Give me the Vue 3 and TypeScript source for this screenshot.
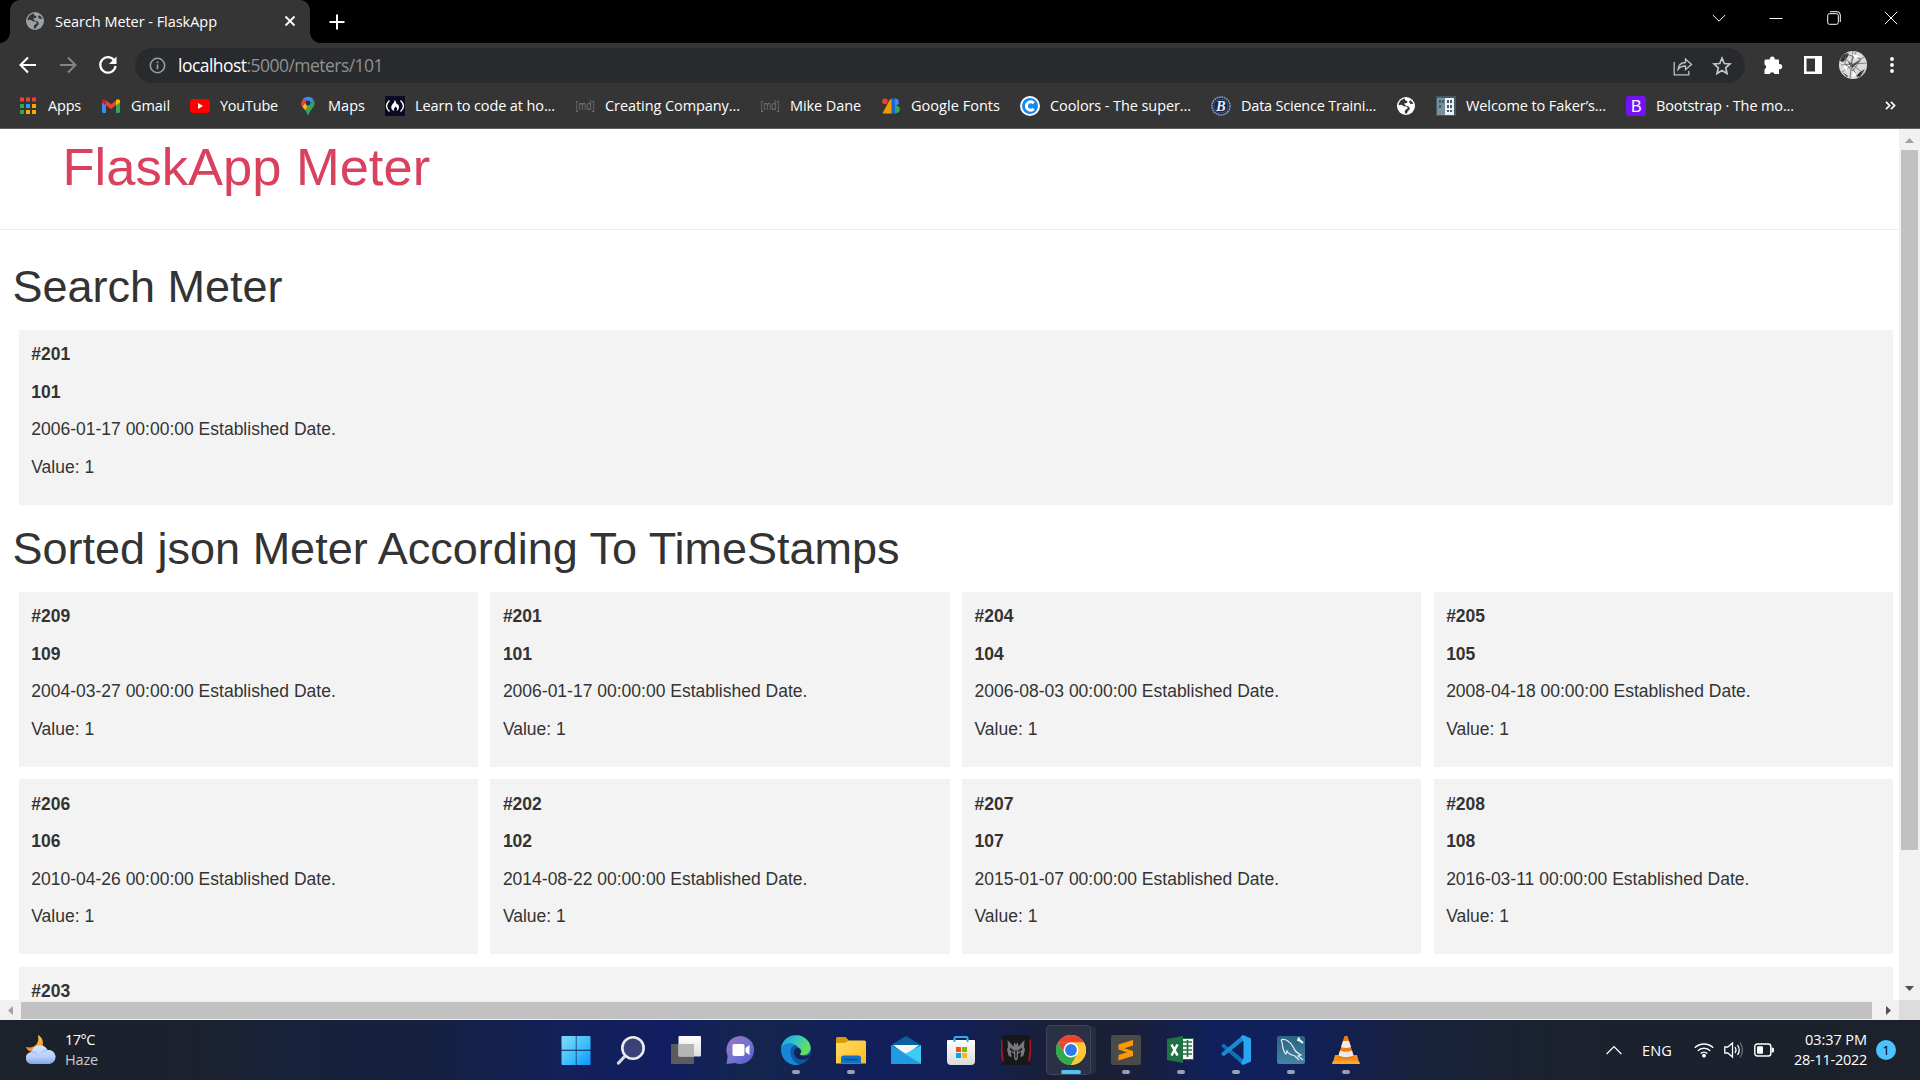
<script setup lang="ts">
interface Bookmark { label?: string; width?: number; icon: string }
interface Meter { id: number; meter: number; date: string; value: number }
interface TaskItem { name: string; icon: string; state?: 'open' | 'active' }

// Spreads the letters of a label so that it fills its slot exactly.
const vFit = {
  mounted(el: HTMLElement, binding: { value: number }) {
    const range = document.createRange()
    range.selectNodeContents(el)
    const natural = range.getBoundingClientRect().width
    const count = (el.textContent ?? '').length
    el.style.letterSpacing = `${(binding.value - natural) / count}px`
  },
}

const globe = (fill: string, land: string) =>
  `<circle cx="10" cy="10" r="9" fill="${fill}"/><path fill="${land}" d="M9 2.600C5 3.200 2.700 6.300 2.700 9.300q1.500-.8 3.300-.3l1.500 1.300 3 .2q1.500.6 1 2l-1.800 1.300-1 1.200.3 2.500c1.700.2 2.500-.8 2.700-2.300l1.900-1.600c.6-2.600-1-3.400-3-3.600L9 9 8 7.400l3-.5.400-2-2.500-.6zM14.300 4.200l-1.300 1.500 1.100 2.100 3.200.3c-.4-1.700-1.500-3-3-3.900z"/>`

const bookmarks: Bookmark[] = [
  { label: 'Apps', width: 33, icon: '<g fill="#ea4335"><path d="M2 1.500h4v4H2zM8 1.500h4v4H8zM14 1.500h4v4h-4z"/></g><path fill="#34a853" d="M2 8h4v4H2zM2 14h4v4H2z"/><path fill="#2a9df4" d="M8 8h4v4H8z"/><path fill="#fbab00" d="M14 8h4v4h-4zM8 14h4v4H8zM14 14h4v4h-4z"/>' },
  { label: 'Gmail', width: 39, icon: '<path fill="#4285f4" d="M1 5v10.500Q1 17 2.500 17H5V8z"/><path fill="#34a853" d="M19 5v10.500q0 1.500-1.500 1.500H15V8z"/><path fill="#ea4335" d="M5 4.500l5 3.800 5-3.800v4.800l-5 3.800-5-3.800z"/><path fill="#c5221f" d="M1 5.500C1 3 3.200 2.600 5 4v5.300L1 6.500z"/><path fill="#fbbc04" d="M19 5.500C19 3 16.800 2.600 15 4v5.300l4-2.800z"/>' },
  { label: 'YouTube', width: 58, icon: '<rect x="0" y="3" width="20" height="14" rx="3.500" fill="#f00"/><path fill="#fff" d="M8 7l5 3-5 3z"/>' },
  { label: 'Maps', width: 37, icon: '<path fill="#34a853" d="M16.500 7c0 5-4.500 6-6.500 13-.7-2.600-1.700-4.300-2.800-5.800L15.700 4q.8 1.300.8 3z"/><path fill="#fbbc04" d="M7.200 14.200C5.300 11.800 3.500 10.500 3.500 7l4-1 4.500 2.500z"/><path fill="#ea4335" d="M3.500 7c0-1.800.6-3.200 1.600-4.300l3.700 3L4.600 10.500Q3.500 9 3.500 7z"/><path fill="#4285f4" d="M5.100 2.700C7.800-.2 13.500-.3 15.700 4L8.800 12 8 5z"/><circle cx="10" cy="7" r="2.400" fill="#2f3033"/>' },
  { label: 'Learn to code at ho...', width: 140, icon: '<rect width="20" height="20" fill="#0a0a23"/><path fill="none" stroke="#fff" stroke-width="1.400" d="M4.500 4.500c-4 3.500-4 7.500 0 11M15.500 4.500c4 3.500 4 7.500 0 11"/><path fill="#fff" d="M9.500 4c2 1.500 1.400 3 2.300 4.300.6.800.9-.3.700-.9 2.300 2.800 1.900 6.100-1 7.600 1.500-2 .3-3.800-1-4.800.2 1.500-1 1.300-1.500 2.500-.3.900 0 1.600.7 2.300-4.600-1.300-4-5-1.600-7.500C9.300 6.300 9.700 5.300 9.500 4z"/>' },
  { label: 'Creating Company...', width: 135, icon: '<text x="0.500" y="14" textLength="19" lengthAdjust="spacingAndGlyphs" font-size="13" font-family="Open Sans, sans-serif" fill="#77787a">[md]</text>' },
  { label: 'Mike Dane', width: 71, icon: '<text x="0.500" y="14" textLength="19" lengthAdjust="spacingAndGlyphs" font-size="13" font-family="Open Sans, sans-serif" fill="#77787a">[md]</text>' },
  { label: 'Google Fonts', width: 89, icon: '<path fill="#f29900" d="M8.500 4L11 2.500V17.500H1.500z"/><circle cx="4" cy="5.300" r="2.800" fill="#ea4335"/><path fill="#1967d2" d="M10.500 2.500h4v15h-4z"/><path fill="#4285f4" d="M14 2.500c5 0 5.500 7 0 7z"/><path fill="#34a853" d="M14 9.300c6.500 0 6.500 8.200 0 8.200z"/>' },
  { label: 'Coolors - The super...', width: 141, icon: '<circle cx="10" cy="10" r="10" fill="#fff"/><circle cx="10" cy="10" r="8" fill="#1489f4"/><path fill="none" stroke="#fff" stroke-width="3" d="M13.700 7.200a4.200 4.200 0 1 0 0 5.600"/>' },
  { label: 'Data Science Traini...', width: 135, icon: '<circle cx="10" cy="10" r="9" fill="#132450" stroke="#8492ad" stroke-width="1.600" stroke-dasharray="2 .5"/><circle cx="10" cy="10" r="7" fill="none" stroke="#64759a" stroke-width=".6"/><text x="5" y="15" font-size="14.500" font-style="italic" font-weight="bold" font-family="Liberation Serif, serif" fill="#e8edf5">B</text>' },
  { icon: globe('#fff', '#353535') },
  { label: 'Welcome to Faker’s...', width: 140, icon: '<rect y="0" width="20" height="20" fill="#455a64"/><path fill="#78909c" d="M1 2h8v17H1z"/><path fill="#eceff1" d="M9 2h9v17H9z"/><path fill="#455a64" d="M3 4h2v3H3zM6 4h2v3H6zM3 9h2v3H3zM11 4h5v3h-5zM11 9h5v3h-5zM11 14h5v2h-5z"/><path fill="#fff" d="M13 3h1v14h-1z"/>' },
  { label: 'Bootstrap · The mo...', width: 138, icon: '<rect width="20" height="20" rx="3" fill="#7412f5"/><text x="5" y="15.500" font-size="16" font-family="Liberation Sans, sans-serif" fill="#fff">B</text>' },
]

const found: Meter = { id: 201, meter: 101, date: '2006-01-17', value: 1 }

const sorted: Meter[] = [
  { id: 209, meter: 109, date: '2004-03-27', value: 1 },
  { id: 201, meter: 101, date: '2006-01-17', value: 1 },
  { id: 204, meter: 104, date: '2006-08-03', value: 1 },
  { id: 205, meter: 105, date: '2008-04-18', value: 1 },
  { id: 206, meter: 106, date: '2010-04-26', value: 1 },
  { id: 202, meter: 102, date: '2014-08-22', value: 1 },
  { id: 207, meter: 107, date: '2015-01-07', value: 1 },
  { id: 208, meter: 108, date: '2016-03-11', value: 1 },
]

const lastId = 203

const tasks: TaskItem[] = [
  { name: 'start', icon: '<defs><linearGradient id="win" x1="0" y1="0" x2="30" y2="30" gradientUnits="userSpaceOnUse"><stop stop-color="#86dcfb"/><stop offset=".55" stop-color="#3dc0f9"/><stop offset="1" stop-color="#0a94ff"/></linearGradient></defs><path fill="url(#win)" d="M1.500 1H14.800v13.800H.500V2q0-1 1-1zM15.500 1h13q1 0 1 1v12.800h-14zM.5 15.800h14.300V30H1.500q-1 0-1-1zM15.500 15.800h14V29q0 1-1 1h-13z"/>' },
  { name: 'search', icon: '<path stroke="#d9dade" stroke-width="3.200" stroke-linecap="round" d="M2.500 28l7.500-8"/><circle cx="17" cy="13" r="10.700" fill="#3a4379" stroke="#ececee" stroke-width="2.600"/>' },
  { name: 'views', icon: '<defs><linearGradient id="tv" x1="0" y1="0" x2="0" y2="1"><stop stop-color="#fff"/><stop offset="1" stop-color="#dcdcdc"/></linearGradient></defs><rect x="0" y="9" width="23" height="20" rx="1" fill="#5c5c5f"/><rect x="7.500" y="1" width="22.500" height="20.500" rx="1" fill="url(#tv)"/><path fill="#b5b5b6" d="M7.500 9H23v12.500H8.500q-1 0-1-1z"/>' },
  { name: 'chat', icon: '<defs><linearGradient id="ch" x1="0" y1="0" x2="1" y2="1"><stop stop-color="#a473bc"/><stop offset=".55" stop-color="#7173d2"/><stop offset="1" stop-color="#5457c9"/></linearGradient></defs><path fill="url(#ch)" d="M15 1a14 14 0 1 1-6 27L.500 29l1.200-8A14 14 0 0 1 15 1z"/><rect x="6.500" y="9" width="12" height="12" rx="1.800" fill="#fff"/><path fill="#fff" d="M19.500 13l4-3v10l-4-3z"/>' },
  { name: 'edge', state: 'open', icon: '<defs><linearGradient id="eg" x1="0" y1="0" x2="1" y2=".4"><stop stop-color="#1b9de0"/><stop offset=".5" stop-color="#32c5c9"/><stop offset="1" stop-color="#62e05a"/></linearGradient></defs><circle cx="15" cy="15" r="15" fill="#0c59a4"/><path fill="url(#eg)" d="M0 14C1-1 20-4 27 6c6 8 1 15-6 14-4 0-4-2-2-4 0-5-8-9-14-6-3 1-5 3-5 4z"/><path fill="#1487d6" d="M0 14c1-5 9-8 14-4-5 2-6 8-3 13 2 4 5 6 8 6.500C8 32 0 24 0 14z"/><path fill="#12225c" d="M28 20c-3 2-9 1.500-9-.5 0-1.500 1.500-1.500 1-4-.3-1.600-2-3-4-2.500-4 1-4 7 0 10 4 2.700 9 1.700 12-1l3-1.500z"/>' },
  { name: 'explorer', state: 'open', icon: '<defs><linearGradient id="fo" x1="0" y1="0" x2="1" y2="1"><stop stop-color="#ffdc68"/><stop offset="1" stop-color="#fbbb1b"/></linearGradient></defs><path fill="#dc9a05" d="M0 3.500Q0 2 1.500 2h8l3.500 3.500L11 10H0z"/><path fill="url(#fo)" d="M0 8h9l4-2.500h15.500q1.500 0 1.500 1.500v21.500H0z"/><path fill="#0f72c4" d="M5 28v-5q0-2.500 2.500-2.500h15Q25 20.500 25 23v5z"/><path stroke="#094980" stroke-width="1.200" d="M8 24.500h14"/>' },
  { name: 'mail', icon: '<path fill="#0b5e9f" d="M0 10L15 1l15 9v8H0z"/><path fill="#f5f5f7" d="M2 10h26L15 20z"/><path fill="#1e9be2" d="M0 10l15 9 15 10H0z"/><path fill="#3dccf5" d="M30 10v19L14 19z"/>' },
  { name: 'store', icon: '<defs><linearGradient id="st" x1="0" y1="0" x2="0" y2="1"><stop stop-color="#fff"/><stop offset="1" stop-color="#dadada"/></linearGradient></defs><path fill="none" stroke="#29b0ec" stroke-width="2" d="M8.500 7V3q0-1 1-1h11q1 0 1 1v4"/><path fill="url(#st)" d="M2 5h26q1 0 1 1v20q0 4-4 4H5q-4 0-4-4V6q0-1 1-1z"/><path fill="#f25022" d="M10 12h5v5h-5z"/><path fill="#7fba00" d="M16 12h5v5h-5z"/><path fill="#00a4ef" d="M10 18h5v5h-5z"/><path fill="#ffb900" d="M16 18h5v5h-5z"/><path fill="none" stroke="#29b0ec" stroke-width="2" d="M8.500 4v3M21.500 4v3"/>' },
  { name: 'predator', icon: '<rect x=".5" width="29" height="30" rx="3" fill="#18181a"/><path fill="#a9161d" d="M0 3l1.500 3v10L3 27l-2-1-1-6zM30 3l-1.500 3v10L27 27l2-1 1-6z"/><path fill="#77797c" d="M6.500 5l6 6.500.8-4.500 1.700 3 1.700-3 .8 4.500 6-6.500-.5 7 1 2.500-1.500 6-3 2 .5-6-3 2.500V23l-2 3-2-3v-4l-3-2.500.5 6-3-2-1.500-6 1-2.500z"/><path fill="#1d1d1f" d="M9 12.500l4.500 3.500-1 1L9 15zM21 12.500L16.500 16l1 1L21 15zM14.300 15h1.400v8h-1.400z"/>' },
  { name: 'chrome', state: 'active', icon: '<circle cx="15" cy="15" r="15" fill="#fcc934"/><path fill="#ea4335" d="M2 7.500a15 15 0 0 1 26 0H15z"/><path fill="#34a853" d="M2 7.500A15 15 0 0 0 15 30l6.500-11.200H8.500z"/><path fill="#ea4335" d="M2 7.500L8.500 18.800 9 11l6-3.500h13z"/><path fill="#fcc934" d="M15 7.500h13A15 15 0 0 1 15 30l6.500-11.200z"/><path fill="#34a853" d="M2 7.500L8.500 18.800 15 22v8A15 15 0 0 1 2 7.500z"/><circle cx="15" cy="15" r="7.500" fill="#fff"/><circle cx="15" cy="15" r="5.900" fill="#2d7bea"/>' },
  { name: 'sublime', state: 'open', icon: '<rect width="30" height="30" rx="2" fill="#4a4a49"/><path fill="#ff9800" d="M22 5v5.500l-8.500 2.700L22 16v5L7.500 25.500V20l8.500-2.700L7.500 14.500v-5z"/>' },
  { name: 'excel', state: 'open', icon: '<path fill="#f4f8f5" stroke="#207245" stroke-width="1" d="M14 3.500h13.500v21H14z"/><path fill="none" stroke="#207245" stroke-width="1.700" d="M17 7h9M17 11h9M17 15h9M17 19h9M21.500 5v17"/><path fill="#207245" d="M1 4l16-3v27L1 25z"/><path stroke="#fff" stroke-width="2.500" d="M5.500 9.500l6 11M11.500 9.500l-6 11"/>' },
  { name: 'vscode', state: 'open', icon: '<path fill="#0f72b9" d="M2.500 8.500L23 25l-1 5L0 11z"/><path fill="#1a8ad4" d="M2.500 21.500L23 5l-1-5L0 18.500z"/><path fill="#2aa5f2" d="M22 0l8 3.500v23L22 30l-2-1.500 2.500-5.500V7L20 1.500z"/>' },
  { name: 'workbench', state: 'open', icon: '<defs><linearGradient id="wb" x1="0" y1="0" x2="0" y2="1"><stop stop-color="#2b647f"/><stop offset="1" stop-color="#4583a4"/></linearGradient></defs><rect x="1" y="1" width="28" height="28" rx="2" fill="url(#wb)"/><path fill="none" stroke="#e4eef3" stroke-width="1.200" d="M5 5c4-2 10 2 12.500 7.500 1 3.500 3.500 5.500 7.500 7.500l-3 1 5 4M5 5c2 3 1 5 2 8s1 5 3 6l1-3c2 4 5 4 8 5l4 4"/><path stroke="#f5f8fa" stroke-width="2.200" d="M22 4l5 4M23 2.500l-1 3.500"/>' },
  { name: 'vlc', state: 'open', icon: '<path fill="#f78f1e" d="M4 20h22l2.500 9H1.500z"/><path fill="#fba832" d="M2 26h26l1 3H1z"/><path fill="#f07c12" d="M13.500 1h3L23 22q-8 4-16 0z"/><path fill="#ececec" d="M12 6h6l2 6q-5 2-10 0zM9 15.500q6 2.500 12 0l1.500 5q-7.500 3.500-15 0z"/>' },
]
</script>

<template>
  <div class="screen">
    <header class="tabstrip">
      <div class="tab">
        <svg class="favicon" viewBox="0 0 20 20" v-html="globe('#9aa0a6', '#353535')"></svg>
        <span v-fit="162" class="tab-title">Search Meter - FlaskApp</span>
        <svg class="tab-close" viewBox="0 0 12 12"><path d="M1.500 1.500l9 9M10.500 1.500l-9 9" stroke="#fff" stroke-width="1.800" /></svg>
      </div>
      <svg class="new-tab" viewBox="0 0 16 16"><path d="M8 .5v15M.5 8h15" stroke="#fff" stroke-width="2" /></svg>
      <div class="window-buttons">
        <svg viewBox="0 0 14 14"><path d="M.8 4L7 10.200 13.200 4" /></svg>
        <svg viewBox="0 0 14 14"><path d="M.5 7.500h13" /></svg>
        <svg viewBox="0 0 14 14"><rect x=".7" y="2.700" width="10.600" height="10.600" rx="1.800" /><path d="M3 .7h7q3.300 0 3.300 3.300v7" /></svg>
        <svg viewBox="0 0 14 14"><path d="M.8.8l12.400 12.400M13.200.8L.8 13.200" /></svg>
      </div>
    </header>

    <div class="toolbar">
      <svg class="nav" viewBox="0 0 20 20"><path d="M18 10H2.500M10 2.500L2.500 10l7.500 7.500" fill="none" stroke="#fff" stroke-width="2.100" /></svg>
      <svg class="nav" viewBox="0 0 20 20"><path d="M2 10h15.500M10 2.500l7.500 7.500-7.500 7.500" fill="none" stroke="#858585" stroke-width="2" /></svg>
      <svg class="nav" viewBox="0 0 20 20"><path d="M16.500 5.800A7.700 7.700 0 1 0 17.600 11" fill="none" stroke="#fff" stroke-width="2.200" /><path d="M18.500 1.500v7.500h-7.500z" fill="#fff" /></svg>
      <div class="omnibox">
        <svg class="info" viewBox="0 0 18 18"><circle cx="9" cy="9" r="7.600" fill="none" stroke="#9aa0a6" stroke-width="1.600" /><path d="M9 8v5M9 4.800v1.800" stroke="#9aa0a6" stroke-width="1.800" /></svg>
        <span v-fit="205" class="url"><b>localhost</b>:5000/meters/101</span>
        <svg class="share" viewBox="0 0 20 20"><path d="M1.200 6v12.800h14.600V15M5 13.500C5.500 8.500 8.500 6.700 12.500 6.500V3l6 5.500-6 5V10C9.500 10 7 10.800 5 13.500z" fill="none" stroke="#bdc1c6" stroke-width="1.300" /></svg>
        <svg class="star" viewBox="0 0 20 20"><path d="M10 2.200l2.300 5.300 5.700.5-4.300 3.800 1.300 5.600-5-3-5 3 1.300-5.600L2 8l5.700-.5z" fill="none" stroke="#c4c7c9" stroke-width="1.700" /></svg>
      </div>
      <svg class="puzzle" viewBox="0 0 20 20"><path fill="#fff" d="M2.500 4.500h4.300a2.500 2.500 0 1 1 4.900 0H16v4.600a2.600 2.600 0 1 1 0 5V19h-4.500a2.500 2.500 0 0 0-4.800 0H1.500v-4.800a2.500 2.500 0 0 0 0-4.700V5.500z" /></svg>
      <svg class="panel" viewBox="0 0 20 20"><rect x="1" y="1" width="18" height="18" fill="#fff" /><path fill="#353535" d="M3.500 3.500h8.500v13H3.500z" /></svg>
      <svg class="avatar" viewBox="0 0 28 28">
        <circle cx="14" cy="14" r="14" fill="#dcdcdc" />
        <path fill="#333" d="M1 10C3 3 8 1 10 3l-2 4-4 4zM26 18l-5 8-4-1 4-4zM9 11l5 2 8-4-9 8zM3 21l6 4-1 1z" />
        <path fill="none" stroke="#666" stroke-width=".8" d="M3 5l22 18M14 0l-3 28M25 6L3 21M7 3l15 5-8 12-8-7zM2 14l25-2M12 14l7 13M17 1l-6 13" />
        <path fill="#fff" d="M13 3l8 2-5 3zM4 14l5 2-2 4zM14 20l4 4-5 2z" />
      </svg>
      <svg class="dots" viewBox="0 0 6 18"><circle cx="3" cy="3" r="1.900" /><circle cx="3" cy="9" r="1.900" /><circle cx="3" cy="15" r="1.900" /></svg>
    </div>

    <nav class="bookmarks">
      <div v-for="(b, i) in bookmarks" :key="i" class="bookmark">
        <svg viewBox="0 0 20 20" v-html="b.icon"></svg>
        <span v-if="b.label" v-fit="b.width!" class="label" :style="{ width: b.width + 'px' }">{{ b.label }}</span>
      </div>
      <svg class="more" viewBox="0 0 12 10"><path d="M1 1l4 4-4 4M6.500 1l4 4-4 4" fill="none" stroke="#fff" stroke-width="1.900" /></svg>
    </nav>

    <div class="viewport">
      <main class="page">
        <div class="navbar"><span class="brand">FlaskApp Meter</span></div>
        <h1>Search Meter</h1>
        <div class="cards">
          <section class="card">
            <p><b>#{{ found.id }}</b></p>
            <p><b>{{ found.meter }}</b></p>
            <p>{{ found.date }} 00:00:00 Established Date.</p>
            <p>Value: {{ found.value }}</p>
          </section>
        </div>
        <h1>Sorted json Meter According To TimeStamps</h1>
        <div class="cards">
          <section v-for="m in sorted" :key="m.id" class="card">
            <p><b>#{{ m.id }}</b></p>
            <p><b>{{ m.meter }}</b></p>
            <p>{{ m.date }} 00:00:00 Established Date.</p>
            <p>Value: {{ m.value }}</p>
          </section>
          <section class="card">
            <p><b>#{{ lastId }}</b></p>
          </section>
        </div>
      </main>
      <div class="vbar">
        <svg viewBox="0 0 9 5"><path fill="#a3a3a3" d="M0 5l4.500-5L9 5z" /></svg>
        <div class="vthumb"></div>
        <svg class="down" viewBox="0 0 9 5"><path fill="#505050" d="M0 0h9L4.500 5z" /></svg>
      </div>
      <div class="hbar">
        <svg viewBox="0 0 5 9"><path fill="#a3a3a3" d="M5 0v9L0 4.500z" /></svg>
        <div class="hthumb"></div>
        <svg class="right" viewBox="0 0 5 9"><path fill="#505050" d="M0 0l5 4.500L0 9z" /></svg>
      </div>
      <div class="corner"></div>
    </div>

    <footer class="taskbar">
      <div class="weather">
        <svg viewBox="0 0 30 30">
          <defs>
            <linearGradient id="moon" x1="0" y1="0" x2="0" y2="1"><stop stop-color="#fbc53f" /><stop offset="1" stop-color="#f08b22" /></linearGradient>
            <linearGradient id="cloud" x1="0" y1="0" x2="0" y2="1"><stop stop-color="#d5e5ff" /><stop offset=".6" stop-color="#b9d0fa" /><stop offset="1" stop-color="#7fa4ee" /></linearGradient>
          </defs>
          <path fill="url(#moon)" d="M12 0c8 4 6 17-4 17-4 0-7-2-8-5C8 14 14 9 12 0z" />
          <path fill="url(#cloud)" d="M6 29a6 6 0 0 1-.5-12 8.500 8.500 0 0 1 16-2A7 7 0 0 1 23.500 29z" />
          <path fill="none" stroke="#8eb0f0" stroke-width=".8" d="M5.500 17q4-1 6 3M21.500 15q-4 0-6 3" />
        </svg>
        <div class="weather-text"><span v-fit="30">17°C</span><span v-fit="33" class="dim">Haze</span></div>
      </div>

      <div class="apps">
        <div v-for="t in tasks" :key="t.name" class="app" :class="t.state">
          <svg viewBox="0 0 30 30" v-html="t.icon"></svg>
        </div>
      </div>

      <div class="tray">
        <svg class="chev" viewBox="0 0 16 10"><path d="M.6 9L8 1.500 15.400 9" fill="none" stroke="#fff" stroke-width="1.200" /></svg>
        <span v-fit="30" class="lang">ENG</span>
        <svg class="wifi" viewBox="0 0 20 16"><g fill="none" stroke="#fff" stroke-width="1.500"><path d="M.8 5.800a13 13 0 0 1 18.400 0M3.800 8.800a8.700 8.700 0 0 1 12.400 0M6.700 11.500a4.700 4.700 0 0 1 6.600 0" /></g><circle cx="10" cy="13.700" r="1.900" fill="#fff" /></svg>
        <svg class="sound" viewBox="0 0 20 18"><g fill="none" stroke="#fff" stroke-width="1.300"><path d="M.8 6h3l4.700-4v14l-4.700-4h-3z" /><path d="M11 6q2 3 0 6M13.500 4q3.500 5 0 10" /><path stroke="#666b75" d="M16 1.500q5 7.500 0 15" /></g></svg>
        <svg class="battery" viewBox="0 0 20 14"><rect x=".8" y="1" width="16" height="12" rx="2.500" fill="none" stroke="#fff" stroke-width="1.400" /><rect x="3" y="3.200" width="6" height="7.600" rx="1" fill="#fff" /><path fill="#fff" d="M17.500 4.500h1q1.500 0 1.500 1.500v2q0 1.500-1.500 1.500h-1z" /></svg>
        <div class="clock"><span v-fit="62">03:37 PM</span><span v-fit="73">28-11-2022</span></div>
        <span class="badge">1</span>
      </div>
    </footer>
  </div>
</template>

<style>
body {
  margin: 0;
  overflow: hidden;
}
</style>

<style scoped>
.screen {
  width: 1920px;
  height: 1080px;
  display: flex;
  flex-direction: column;
  overflow: hidden;
  background: #fff;
  color: #fff;
  font-family: 'Open Sans', 'Noto Sans', sans-serif;
  font-size: 14.500px;
}
svg {
  display: block;
  flex: none;
}
span {
  white-space: nowrap;
}

.tabstrip {
  height: 43px;
  flex: none;
  background: #000;
  display: flex;
  align-items: center;
}
.tab {
  position: relative;
  width: 300px;
  height: 43px;
  margin-left: 10px;
  background: #353535;
  border-radius: 10px 10px 0 0;
  display: flex;
  align-items: center;
  box-sizing: border-box;
  padding: 0 15px 1px;
}
.tab::before,
.tab::after {
  content: '';
  position: absolute;
  bottom: 0;
  width: 10px;
  height: 10px;
}
.tab::before {
  left: -10px;
  background: radial-gradient(circle at 0 0, #000 9.500px, #353535 10px);
}
.tab::after {
  right: -10px;
  background: radial-gradient(circle at 100% 0, #000 9.500px, #353535 10px);
}
.favicon {
  width: 20px;
  height: 20px;
}
.tab-title {
  width: 162px;
  margin-left: 10px;
}
.tab-close {
  width: 12px;
  height: 12px;
  margin-left: auto;
  margin-right: -1px;
}
.new-tab {
  width: 16px;
  height: 16px;
  margin-left: 19px;
}
.window-buttons {
  display: flex;
  gap: 43.500px;
  margin-left: auto;
  margin-right: 22px;
  margin-bottom: 7px;
}
.window-buttons svg {
  width: 14px;
  height: 14px;
  fill: none;
  stroke: #fff;
  stroke-width: 1;
}

.toolbar {
  height: 45px;
  flex: none;
  background: #353535;
  display: flex;
  align-items: center;
  padding-left: 18px;
  box-sizing: border-box;
}
.nav {
  width: 20px;
  height: 20px;
  margin: 0 20px 1px 0;
}
.omnibox {
  width: 1610px;
  height: 35px;
  margin-left: -3px;
  border-radius: 18px;
  background: #292a2d;
  display: flex;
  align-items: center;
  box-sizing: border-box;
  padding: 0 13px 0 14px;
}
.info {
  width: 17px;
  height: 17px;
}
.url {
  margin: 0 0 2px 12px;
  font-size: 17.500px;
  color: #8f9195;
}
.url b {
  font-weight: 400;
  color: #fff;
}
.share {
  width: 20px;
  height: 20px;
  margin-left: auto;
}
.star {
  width: 20px;
  height: 20px;
  margin-left: 19px;
}
.puzzle {
  width: 20px;
  height: 20px;
  margin: 0 0 2px 18px;
}
.panel {
  width: 20px;
  height: 20px;
  margin: 0 0 1px 20px;
}
.avatar {
  width: 28px;
  height: 28px;
  margin: 0 0 1px 16px;
}
.dots {
  width: 6px;
  height: 18px;
  margin: 0 0 1px 22px;
  fill: #fff;
}

.bookmarks {
  height: 41px;
  flex: none;
  box-sizing: border-box;
  padding: 0 24px 5px 18px;
  background: #353535;
  border-bottom: 1px solid #5f5f5f;
  display: flex;
  align-items: center;
  gap: 20px;
}
.bookmark {
  display: flex;
  align-items: center;
  gap: 10px;
}
.bookmark svg {
  width: 20px;
  height: 20px;
  overflow: visible;
}
.more {
  width: 11px;
  height: 9px;
  margin-left: auto;
}

.viewport {
  height: 891px;
  flex: none;
  display: grid;
  grid-template: 871px 20px / 1899px 21px;
}
.page {
  overflow: hidden;
  background: #fff;
  color: #333;
  font-family: 'Liberation Sans', Arial, sans-serif;
  font-size: 17.500px;
  line-height: 25px;
}
.navbar {
  height: 100px;
  border-bottom: 1px solid #eee;
  padding-left: 62.500px;
}
.brand {
  display: block;
  color: #d9415f;
  font-size: 52.500px;
  line-height: 75px;
}
h1 {
  margin: 12.500px 0 12.500px 12.500px;
  font-size: 45px;
  line-height: 49.500px;
  font-weight: 400;
}
.navbar + h1 {
  margin-top: 31.500px;
}
.cards {
  display: flex;
  flex-wrap: wrap;
  gap: 12.500px;
  padding: 6.250px 6.250px 6.250px 18.750px;
}
.card {
  flex: 1 1 400px;
  height: 175px;
  box-sizing: border-box;
  padding: 12.250px 12.500px;
  background: #f3f3f3;
}
.card p {
  margin: 0 0 12.500px;
}

.vbar,
.hbar {
  background: #f1f1f1;
  display: flex;
  align-items: center;
}
.vbar {
  flex-direction: column;
}
.vbar svg {
  width: 9px;
  height: 5px;
  margin: 9px 0 7px;
}
.vthumb {
  width: 17px;
  height: 700px;
  background: #c1c1c1;
}
.vbar .down {
  margin: auto 0 9px;
}
.hbar svg {
  width: 5px;
  height: 9px;
  margin: 0 8px;
}
.hthumb {
  width: 1851px;
  height: 17px;
  background: #c1c1c1;
}
.hbar .right {
  margin: 0 8px 0 auto;
}
.corner {
  background: #dcdcdc;
}

.taskbar {
  height: 60px;
  flex: none;
  display: flex;
  align-items: center;
  background: linear-gradient(90deg, #1c212b 0, #1b212d 190px, #17213a 290px, #14203f 430px, #13205a 560px, #121e60 670px, #14264d 750px, #111f5c 870px, #131f56 960px, #1a1f34 1060px, #191f38 1130px, #10205c 1215px, #11205a 1300px, #17213b 1420px, #1b212d 1560px, #1c212b 1920px);
}
.weather {
  width: 530px;
  display: flex;
  align-items: center;
  padding-left: 26px;
}
.weather svg {
  width: 30px;
  height: 30px;
}
.weather-text {
  margin-left: 9px;
  display: flex;
  flex-direction: column;
  align-items: flex-start;
  line-height: 20px;
}
.dim {
  color: #c9cbcf;
}
.apps {
  display: flex;
  gap: 5px;
  margin-left: -5px;
}
.app {
  position: relative;
  width: 50px;
  height: 50px;
  display: flex;
  align-items: center;
  justify-content: center;
}
.app svg {
  width: 30px;
  height: 30px;
}
.app.open::after,
.app.active::after {
  content: '';
  position: absolute;
  bottom: 1px;
  width: 8px;
  height: 4px;
  border-radius: 2px;
  background: #9a9fb5;
}
.app.active::after {
  width: 20px;
  background: #4cc2ff;
}
.app.active::before {
  content: '';
  position: absolute;
  left: 0;
  top: 0;
  width: 43px;
  height: 48px;
  border: 1px solid #ffffff1c;
  border-radius: 5px;
  background: #ffffff14;
  box-shadow: 6px 0 0 -1px #ffffff10;
}
.app.active svg {
  position: relative;
}
.tray {
  margin-left: auto;
  margin-right: 24px;
  display: flex;
  align-items: center;
}
.chev {
  width: 16px;
  height: 10px;
}
.lang {
  width: 30px;
  margin-left: 20px;
}
.wifi {
  width: 20px;
  height: 16px;
  margin-left: 22px;
}
.sound {
  width: 20px;
  height: 18px;
  margin-left: 10px;
}
.battery {
  width: 20px;
  height: 14px;
  margin-left: 10px;
}
.clock {
  width: 73px;
  margin-left: 20px;
  display: flex;
  flex-direction: column;
  align-items: flex-end;
  line-height: 20px;
}
.badge {
  width: 20px;
  height: 20px;
  margin-left: 9px;
  border-radius: 50%;
  background: #4cc2ff;
  color: #000;
  font-size: 13.500px;
  line-height: 20px;
  text-align: center;
}
</style>
